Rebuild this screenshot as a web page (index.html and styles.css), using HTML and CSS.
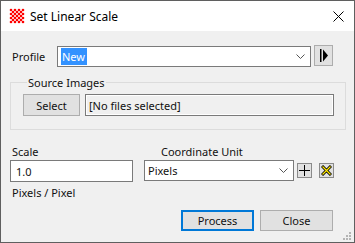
FILE: index.html
```html
<!DOCTYPE html>
<html lang="en">
<head>
  <meta charset="UTF-8">
  <meta name="viewport" content="width=device-width, initial-scale=1.0">
  <title>Set Linear Scale</title>
  <link rel="stylesheet" href="styles.css">
</head>
<body>

<div class="window">
  <!-- Title bar -->
  <div class="titlebar">
    <svg class="app-logo" width="16" height="16" viewBox="0 0 16 16">
      <g fill="#f00">
        <circle cx="2" cy="2" r="1.3"/><circle cx="6" cy="2" r="1.3"/><circle cx="10" cy="2" r="1.3"/><circle cx="14" cy="2" r="1.3"/>
        <circle cx="4" cy="4" r="1.3"/><circle cx="8" cy="4" r="1.3"/><circle cx="12" cy="4" r="1.3"/>
        <circle cx="2" cy="6" r="1.3"/><circle cx="6" cy="6" r="1.3"/><circle cx="10" cy="6" r="1.3"/><circle cx="14" cy="6" r="1.3"/>
        <circle cx="4" cy="8" r="1.3"/><circle cx="8" cy="8" r="1.3"/><circle cx="12" cy="8" r="1.3"/>
        <circle cx="2" cy="10" r="1.3"/><circle cx="6" cy="10" r="1.3"/><circle cx="10" cy="10" r="1.3"/><circle cx="14" cy="10" r="1.3"/>
        <circle cx="4" cy="12" r="1.3"/><circle cx="8" cy="12" r="1.3"/><circle cx="12" cy="12" r="1.3"/>
        <circle cx="2" cy="14" r="1.3"/><circle cx="6" cy="14" r="1.3"/><circle cx="10" cy="14" r="1.3"/><circle cx="14" cy="14" r="1.3"/>
      </g>
    </svg>
    <span class="title">Set Linear Scale</span>
    <svg class="close-x" width="11" height="11" viewBox="0 0 11 11">
      <path d="M0.5 0.5 L10.5 10.5 M10.5 0.5 L0.5 10.5" stroke="#000" stroke-width="1"/>
    </svg>
  </div>

  <div class="content">
    <!-- Profile row -->
    <div class="profile-row">
      <span class="label profile-label">Profile</span>
      <div class="combo profile-combo">
        <span class="combo-text"><span class="selected">New</span></span>
        <svg class="chevron" width="9" height="5" viewBox="0 0 9 5">
          <path d="M0.5 0.5 L4.5 4.5 L8.5 0.5" fill="none" stroke="#555" stroke-width="1"/>
        </svg>
      </div>
      <div class="icon-btn play-btn">
        <svg width="10" height="13" viewBox="0 0 10 13">
          <rect x="1" y="0" width="1.5" height="13" fill="#000"/>
          <path d="M4 0.5 L9 6.5 L4 12.5 Z" fill="#000"/>
        </svg>
      </div>
    </div>

    <!-- Source images group -->
    <fieldset class="group">
      <legend>Source Images</legend>
      <div class="group-row">
        <div class="btn select-btn">Select</div>
        <div class="field files-field">[No files selected]</div>
      </div>
    </fieldset>

    <!-- Scale and unit -->
    <div class="scale-row">
      <div class="scale-col">
        <span class="label">Scale</span>
        <div class="field scale-field">1.0</div>
        <span class="label unit-note">Pixels / Pixel</span>
      </div>
      <div class="unit-col">
        <span class="label unit-label">Coordinate Unit</span>
        <div class="unit-line">
          <div class="combo unit-combo">
            <span class="combo-text">Pixels</span>
            <svg class="chevron" width="9" height="5" viewBox="0 0 9 5">
              <path d="M0.5 0.5 L4.5 4.5 L8.5 0.5" fill="none" stroke="#555" stroke-width="1"/>
            </svg>
          </div>
          <div class="small-btn add-btn">
            <svg width="11" height="11" viewBox="0 0 11 11">
              <path d="M5.5 0 V11 M0 5.5 H11" stroke="#000" stroke-width="1"/>
            </svg>
          </div>
          <div class="small-btn del-btn">
            <svg width="11" height="11" viewBox="0 0 11 11">
              <path d="M1 1 L10 10 M10 1 L1 10" stroke="#000" stroke-width="3"/>
              <path d="M1.5 1.5 L9.5 9.5 M9.5 1.5 L1.5 9.5" stroke="#ffe600" stroke-width="1.2"/>
            </svg>
          </div>
        </div>
      </div>
    </div>

    <!-- Footer buttons -->
    <div class="footer">
      <div class="btn action-btn default-btn">Process</div>
      <div class="btn action-btn">Close</div>
    </div>
  </div>

  <div class="grip">
    <svg width="8" height="8" viewBox="0 0 8 8">
      <g fill="#b4b4b4">
        <rect x="6" y="0" width="2" height="2"/>
        <rect x="3" y="3" width="2" height="2"/><rect x="6" y="3" width="2" height="2"/>
        <rect x="0" y="6" width="2" height="2"/><rect x="3" y="6" width="2" height="2"/><rect x="6" y="6" width="2" height="2"/>
      </g>
    </svg>
  </div>
</div>

</body>
</html>
```

FILE: styles.css
```css
body {
  margin: 0;
  padding: 0;
  font-family: "Segoe UI", "Noto Sans", sans-serif;
  font-size: 11px;
  color: #111;
  background-color: #f0f0f0;
}
.window {
  position: relative;
  box-sizing: border-box;
  width: 355px;
  height: 243px;
  border: 1px solid #5f5f5f;
  background-color: #f0f0f0;
}
/* Title bar */
.titlebar {
  display: flex;
  align-items: center;
  height: 30px;
  background-color: #fff;
}
.app-logo {
  margin-left: 8px;
  margin-right: 5px;
}
.title {
  flex: 1;
  font-size: 12px;
  color: #000;
}
.close-x {
  margin-right: 10px;
}
.content {
  padding: 14px 0 0 11px;
}
.label {
  line-height: 15px;
}
/* Profile */
.profile-row {
  display: flex;
  align-items: center;
  height: 22px;
}
.profile-label {
  width: 45px;
}
.combo {
  box-sizing: border-box;
  display: flex;
  align-items: center;
  height: 21px;
  background-color: #fff;
  border: 1px solid #7a7a7a;
}
.combo-text {
  flex: 1;
  padding-left: 3px;
}
.chevron {
  margin-right: 5px;
}
.profile-combo {
  width: 254px;
  margin-top: 1px;
}
.selected {
  background-color: #3392ff;
  color: #fff;
  padding: 1px 2px 1px 1px;
}
.icon-btn {
  box-sizing: border-box;
  display: flex;
  align-items: center;
  justify-content: center;
  width: 19px;
  height: 21px;
  margin-left: 3px;
  margin-top: -1px;
  background-color: #e1e1e1;
  border: 1px solid #adadad;
}
/* Group */
.group {
  box-sizing: border-box;
  width: 336px;
  margin: 8px 0 0 -2px;
  padding: 4px 10px 13px 12px;
  border: 1px solid #dcdcdc;
}
.group legend {
  padding: 0 1px;
  margin-left: 4px;
  line-height: 15px;
}
.group-row {
  display: flex;
  gap: 5px;
}
.btn {
  box-sizing: border-box;
  display: flex;
  align-items: center;
  justify-content: center;
  background-color: #e1e1e1;
  border: 1px solid #adadad;
}
.select-btn {
  width: 57px;
  height: 22px;
}
.field {
  box-sizing: border-box;
  display: flex;
  align-items: center;
  height: 22px;
  padding-left: 3px;
  background-color: #fff;
  border: 1px solid #7a7a7a;
}
.files-field {
  width: 249px;
  background-color: #f0f0f0;
  box-shadow: inset 0 0 0 1px #fff;
}
/* Scale row */
.scale-row {
  display: flex;
  margin-top: 14px;
}
.scale-col {
  display: flex;
  flex-direction: column;
  margin-left: -1px;
}
.scale-col .label {
  padding-left: 1px;
}
.scale-field {
  width: 123px;
  margin-top: 1px;
  margin-left: -1px;
  padding-left: 5px;
}
.unit-note {
  margin-top: 3px;
}
.unit-col {
  display: flex;
  flex-direction: column;
  margin-left: 11px;
}
.unit-label {
  padding-left: 17px;
}
.unit-line {
  display: flex;
  align-items: center;
  margin-top: 1px;
}
.unit-combo {
  width: 150px;
}
.small-btn {
  box-sizing: border-box;
  display: flex;
  align-items: center;
  justify-content: center;
  width: 15px;
  height: 15px;
  background-color: #e1e1e1;
  border: 1px solid #8a8a8a;
}
.add-btn {
  margin-left: 3px;
}
.del-btn {
  margin-left: 7px;
}
/* Footer */
.footer {
  display: flex;
  justify-content: flex-end;
  gap: 6px;
  margin-top: 10px;
  margin-right: 21px;
}
.action-btn {
  width: 73px;
  height: 21px;
}
.default-btn {
  border: 2px solid #0078d7;
}
.grip {
  position: absolute;
  right: 3px;
  bottom: 2px;
  line-height: 0;
}
```
